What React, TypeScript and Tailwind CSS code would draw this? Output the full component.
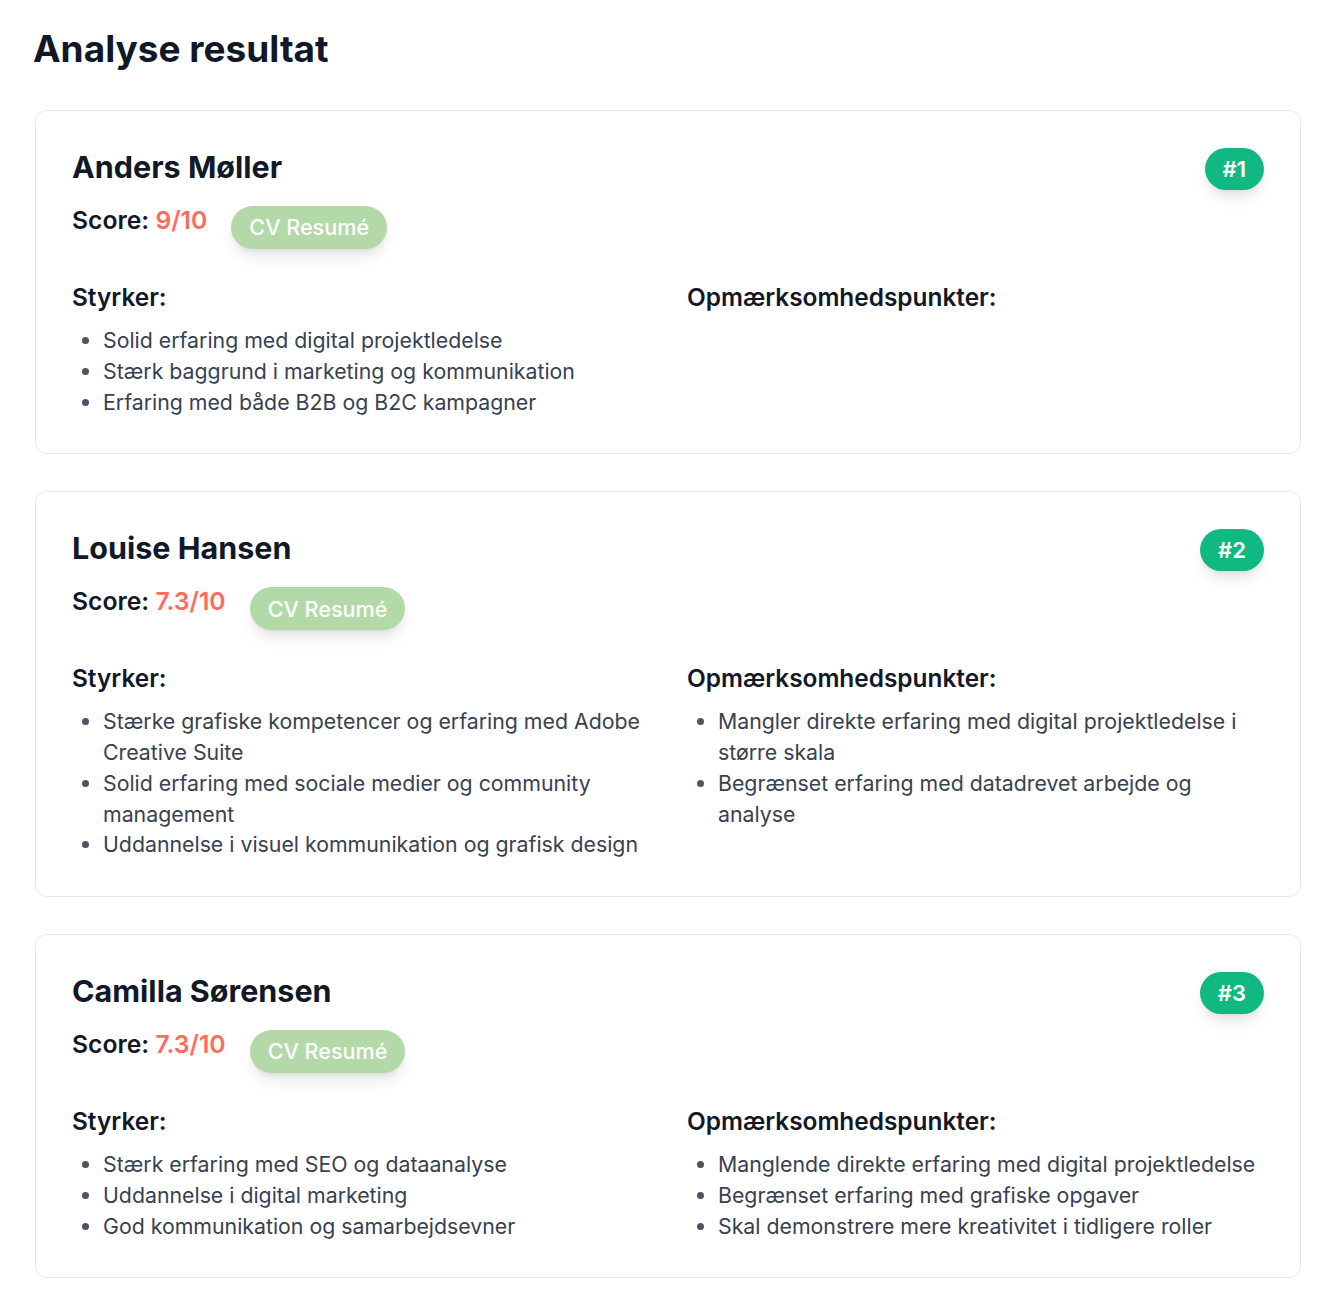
import React from 'react';

interface Candidate {
  name: string;
  score: string;
  rank: number;
  strengths: string[];
  concerns: string[];
}

const candidates: Candidate[] = [
  {
    name: 'Anders Møller',
    score: '9/10',
    rank: 1,
    strengths: [
      'Solid erfaring med digital projektledelse',
      'Stærk baggrund i marketing og kommunikation',
      'Erfaring med både B2B og B2C kampagner',
    ],
    concerns: [],
  },
  {
    name: 'Louise Hansen',
    score: '7.3/10',
    rank: 2,
    strengths: [
      'Stærke grafiske kompetencer og erfaring med Adobe Creative Suite',
      'Solid erfaring med sociale medier og community management',
      'Uddannelse i visuel kommunikation og grafisk design',
    ],
    concerns: [
      'Mangler direkte erfaring med digital projektledelse i større skala',
      'Begrænset erfaring med datadrevet arbejde og analyse',
    ],
  },
  {
    name: 'Camilla Sørensen',
    score: '7.3/10',
    rank: 3,
    strengths: [
      'Stærk erfaring med SEO og dataanalyse',
      'Uddannelse i digital marketing',
      'God kommunikation og samarbejdsevner',
    ],
    concerns: [
      'Manglende direkte erfaring med digital projektledelse',
      'Begrænset erfaring med grafiske opgaver',
      'Skal demonstrere mere kreativitet i tidligere roller',
    ],
  },
];

const PointList: React.FC<{ title: string; items: string[] }> = ({ title, items }) => (
  <div>
    <h3 className="text-[24.4px] font-semibold leading-[32px] text-[#111827]">{title}</h3>
    {items.length > 0 && (
      <ul className="mt-3 list-disc pl-[31px] text-[21.3px] leading-[30.75px] text-[#374151] marker:text-[#4b5563]">
        {items.map((item) => (
          <li key={item}>{item}</li>
        ))}
      </ul>
    )}
  </div>
);

const CandidateCard: React.FC<{ candidate: Candidate }> = ({ candidate }) => (
  <div className="rounded-xl border border-[#e5e7eb] bg-white p-9">
    <div className="flex items-start justify-between">
      <div>
        <h2 className="text-[30.5px] font-bold leading-[40px] text-[#111827]">{candidate.name}</h2>
        <div className="mt-[17px] flex items-start gap-6">
          <p className="text-[24.7px] font-semibold leading-[32px] text-[#111827]">
            Score: <span className="text-[#ff6b5e]">{candidate.score}</span>
          </p>
          <button
            type="button"
            className="mt-[2px] flex h-[43px] items-center rounded-full bg-[#b4d9a9] px-[18px] text-[21.6px] font-medium text-white shadow-lg"
          >
            CV Resumé
          </button>
        </div>
      </div>
      <span className="mt-px flex h-[42px] items-center rounded-full bg-[#10b981] px-[18px] text-[22px] font-semibold text-white shadow-lg">
        #{candidate.rank}
      </span>
    </div>

    <div className="mt-8 grid grid-cols-2 gap-x-[38px]">
      <PointList title="Styrker:" items={candidate.strengths} />
      <PointList title="Opmærksomhedspunkter:" items={candidate.concerns} />
    </div>
  </div>
);

export default function App() {
  return (
    <div className="min-h-screen bg-white pb-[29px] pl-[35px] pr-[39px] pt-[29px] font-['Inter',sans-serif]">
      <h1 className="-ml-0.5 mb-[41px] text-[37px] font-bold leading-[40px] text-[#111827]">Analyse resultat</h1>
      <div className="flex flex-col gap-[37px]">
        {candidates.map((c) => (
          <CandidateCard key={c.rank} candidate={c} />
        ))}
      </div>
    </div>
  );
}
